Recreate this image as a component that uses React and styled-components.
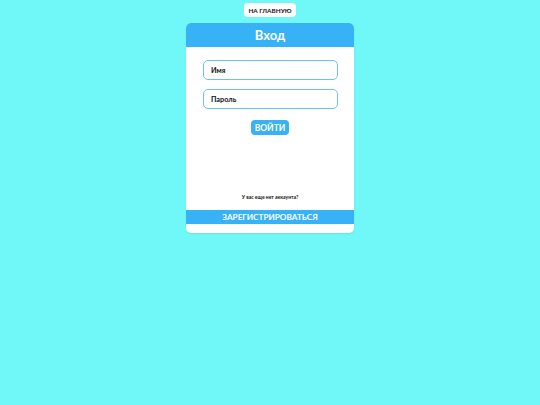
import React from "react";
import styled, { createGlobalStyle } from "styled-components";

const GlobalStyle = createGlobalStyle`
  html, body {
    margin: 0;
    padding: 0;
    background: #70f8f8;
    font-family: "Lato", "Liberation Sans", sans-serif;
  }
`;

const Page = styled.div`
  min-height: 405px;
  display: flex;
  flex-direction: column;
  align-items: center;
  padding-top: 3px;
`;

const HomeButton = styled.button`
  height: 14px;
  padding: 0 4px;
  background: #ffffff;
  border: none;
  border-radius: 4px;
  font-family: inherit;
  font-weight: 700;
  font-size: 6.4px;
  color: #111;
  cursor: pointer;
`;

const Card = styled.div`
  margin-top: 6px;
  width: 168px;
  background: #ffffff;
  border-radius: 5px;
  overflow: hidden;
  display: flex;
  flex-direction: column;
  box-shadow: 0 1px 2px rgba(0, 0, 0, 0.08);
`;

const Header = styled.div`
  height: 24px;
  background: #37b2f6;
  color: #fff;
  font-weight: 700;
  font-size: 13px;
  display: flex;
  align-items: center;
  justify-content: center;
`;

const Form = styled.form`
  display: flex;
  flex-direction: column;
  align-items: center;
  padding-top: 13px;
  gap: 9px;
`;

const Input = styled.input`
  box-sizing: border-box;
  width: 135px;
  height: 20px;
  border: 1.5px solid #6fc2ee;
  border-radius: 5px;
  padding: 0 7.5px;
  font-family: inherit;
  font-weight: 700;
  font-size: 7.3px;
  color: #111;
  outline: none;
  &::placeholder {
    color: #111;
  }
`;

const Submit = styled.button`
  margin-top: 2px;
  height: 15px;
  padding: 0 4px;
  border: none;
  border-radius: 4px;
  background: #37b2f6;
  color: #fff;
  font-family: inherit;
  font-weight: 700;
  font-size: 8.5px;
  cursor: pointer;
`;

const Hint = styled.p`
  margin: 59px 0 0;
  line-height: 6px;
  text-align: center;
  font-weight: 700;
  font-size: 5px;
  color: #111;
`;

const RegisterBar = styled.button`
  margin-top: 10px;
  height: 14px;
  padding: 0;
  border: none;
  background: #37b2f6;
  color: #fff;
  font-family: inherit;
  font-weight: 700;
  font-size: 8.2px;
  cursor: pointer;
`;

const Footer = styled.div`
  height: 9px;
`;

export default function App() {
  return (
    <>
      <GlobalStyle />
      <Page>
        <HomeButton type="button">НА ГЛАВНУЮ</HomeButton>
        <Card>
          <Header>Вход</Header>
          <Form onSubmit={(e) => e.preventDefault()}>
            <Input type="text" placeholder="Имя" />
            <Input type="password" placeholder="Пароль" />
            <Submit type="submit">ВОЙТИ</Submit>
          </Form>
          <Hint>У вас еще нет аккаунта?</Hint>
          <RegisterBar type="button">ЗАРЕГИСТРИРОВАТЬСЯ</RegisterBar>
          <Footer />
        </Card>
      </Page>
    </>
  );
}
